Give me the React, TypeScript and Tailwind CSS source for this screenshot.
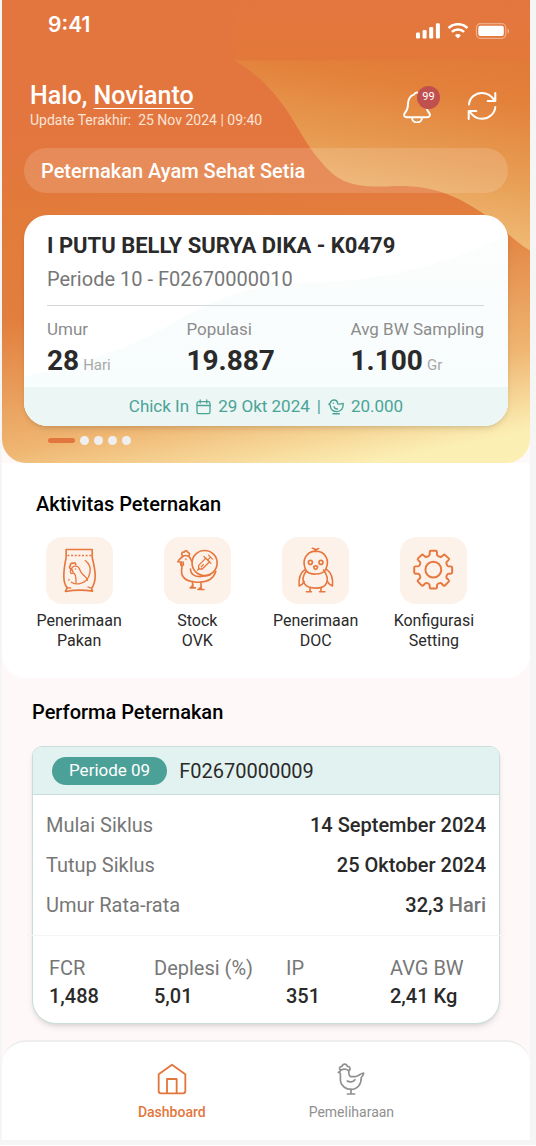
import React from "react";

const robo = "font-['Roboto',sans-serif]";

function StatusIcons() {
  return (
    <svg className="h-4 w-[95px]" viewBox="0 0 95 16" fill="none" aria-hidden="true">
      <g fill="#fff">
        <rect x="0" y="9.500" width="4" height="6" rx="1.200" />
        <rect x="6.600" y="7" width="4" height="8.500" rx="1.200" />
        <rect x="13.200" y="4" width="4" height="11.500" rx="1.200" />
        <rect x="19.900" y="0.300" width="4" height="15.200" rx="1.200" />
        <path d="M39 12.400a3.600 3.600 0 0 1 5.800 0L42 15.500z" />
        <rect x="62.300" y="2.700" width="25.500" height="10.400" rx="2" />
      </g>
      <path d="M32.500 5a13.800 13.800 0 0 1 19 0" stroke="#fff" strokeWidth="2.600" />
      <path d="M35.900 8.900a8.900 8.900 0 0 1 12.200 0" stroke="#fff" strokeWidth="2.600" />
      <rect x="60.400" y="0.700" width="29.400" height="14.600" rx="4" stroke="#fff" strokeOpacity=".4" strokeWidth="1.200" />
      <path d="M91.600 5.500c1.800.6 1.800 4.400 0 5z" fill="#fff" fillOpacity=".5" />
    </svg>
  );
}

function HeaderArt() {
  return (
    <svg className="absolute inset-0 h-full w-full" viewBox="0 0 528 462" preserveAspectRatio="none" aria-hidden="true">
      <defs>
        <linearGradient id="base" gradientUnits="userSpaceOnUse" x1="40" y1="200" x2="103" y2="515">
          <stop offset="0" stopColor="#e27b3a" />
          <stop offset=".35" stopColor="#e27f3e" />
          <stop offset=".75" stopColor="#efb672" />
          <stop offset="1" stopColor="#fcefb4" />
        </linearGradient>
        <linearGradient id="top" gradientUnits="userSpaceOnUse" x1="0" y1="0" x2="0" y2="220">
          <stop offset="0" stopColor="#e3763f" />
          <stop offset=".6" stopColor="#e3763f" />
          <stop offset="1" stopColor="#e3763f" stopOpacity="0" />
        </linearGradient>
        <linearGradient id="wave" gradientUnits="userSpaceOnUse" x1="410" y1="40" x2="375" y2="245">
          <stop offset="0" stopColor="#e17a38" />
          <stop offset=".2" stopColor="#e3803a" />
          <stop offset=".6" stopColor="#e8a056" />
          <stop offset="1" stopColor="#f2c381" />
        </linearGradient>
        <linearGradient id="bar" x1="0" y1="0" x2="0" y2="1">
          <stop offset="0" stopColor="#e3763f" />
          <stop offset="1" stopColor="#e27839" />
        </linearGradient>
      </defs>
      <path d="M0 0h528v462H0z" fill="url(#base)" />
      <path d="M0 0h528v220H0z" fill="url(#top)" />
      <path
        d="M232 60C283 90 293 130 316 158C336 183 350 187 385 186C425 184 449 191 484 215C500 227 511 240 528 250V60z"
        fill="url(#wave)"
      />
      <path d="M232 0h296v60H232z" fill="url(#bar)" />
    </svg>
  );
}

function CardArt() {
  return (
    <svg className="absolute inset-0 h-full w-full" viewBox="0 0 483 211" preserveAspectRatio="none" aria-hidden="true">
      <defs>
        <linearGradient id="cardWave" x1="0" y1="0" x2="0" y2="1">
          <stop offset="0" stopColor="#fcfdfd" />
          <stop offset="1" stopColor="#f6fcfc" />
        </linearGradient>
      </defs>
      <path d="M240 66C290 70 340 66 380 56C430 45 455 32 483 20V211H0V162C60 148 110 132 145 110C175 92 210 76 240 71z" fill="url(#cardWave)" />
    </svg>
  );
}

function BellIcon() {
  return (
    <svg className="h-8 w-[30px]" viewBox="0 0 30 32" fill="none" stroke="#fff" strokeWidth="2" strokeLinejoin="round" aria-hidden="true">
      <path d="M12.200 3.400a3 3 0 0 1 5.600 0c4 1.500 6.200 5 6.200 9.600 0 4.400 1 6.500 3.200 9 1.400 1.800.7 4.200-1.600 4.200H4.400c-2.300 0-3-2.400-1.600-4.200C5 19.500 6 17.400 6 13c0-4.600 2.200-8.100 6.200-9.600z" />
      <path d="M10 26.400a5 5 0 0 0 10 0" />
    </svg>
  );
}

function RefreshIcon() {
  return (
    <svg className="h-[30px] w-[30px]" viewBox="0 0 30 30" fill="none" stroke="#fff" strokeWidth="2" strokeLinecap="round" strokeLinejoin="round" aria-hidden="true">
      <path d="M2 13.500C2.500 6.500 8.500 2 15 2c5 0 9.500 2.800 12.500 7.600M28.300 2v8h-7.600" />
      <path d="M28.300 16C27.800 23 21.500 27.800 15 27.800c-5 0-9.500-2.800-12.500-7.600M1.700 28v-8h7.600" />
    </svg>
  );
}

function CalendarIcon() {
  return (
    <svg className="h-4 w-[15px]" viewBox="0 0 15 16" fill="none" stroke="#4ba396" strokeWidth="1.300" strokeLinecap="round" aria-hidden="true">
      <rect x="1" y="2.700" width="13" height="12" rx="1.800" />
      <path d="M1 6.500h13M4.200 1v3M10.800 1v3" />
    </svg>
  );
}

function ChickIcon() {
  return (
    <svg className="h-4 w-4" viewBox="0 0 16 16" fill="none" stroke="#4ba396" strokeWidth="1.400" strokeLinecap="round" strokeLinejoin="round" aria-hidden="true">
      <path d="M.9 5.200 2.300 4C2.800 2 4.200 1 6 1c2.300 0 3.500 1.700 3.700 3.800 2 .8 3.400.4 5.400-.4.6 5-2.200 8.200-6.200 8.200-4 0-6.800-2.300-6.600-6.400z" />
      <path d="M6 7.800c.5 1.700 1.800 2.400 3.400 2.200M5 14.800h6.300" />
      <circle cx="5.200" cy="4.200" r=".3" fill="#4ba396" strokeWidth=".8" />
    </svg>
  );
}

const tileStroke = {
  fill: "none",
  stroke: "#e6783f",
  strokeWidth: 5,
  strokeLinecap: "round" as const,
  strokeLinejoin: "round" as const,
  "aria-hidden": true,
};

function FeedBagIcon() {
  return (
    <svg className="h-full w-full" viewBox="0 0 203 203" {...tileStroke}>
      <path d="M61 38h79v24c5 20 9 38 9 56 0 17-4 28-11 38l3 8c-25-4-53-4-82 1l5-11c-8-10-10-22-10-36 0-18 3-36 7-56z" />
      <path d="M65 56h72" strokeDasharray="6 5" strokeLinecap="butt" />
      <path d="M63 153l12 2M127 152l9 2" strokeWidth="4" />
      <path d="M119 71c12 9 17 23 14 37-3 18-16 31-33 34-9 1-17-1-23-5" strokeWidth="4" />
      <circle cx="69" cy="130" r="1.500" strokeWidth="2" />
      <path d="M78 97c-7 0-9-7-4-10-2-6 4-9 8-7 4-4 9-1 8 4" strokeWidth="5" />
      <path d="M80 92c5-5 15-5 19 1 5 7 5 13 11 19 7 6 13 10 16 19M80 92l-6 7 6 1c-1 7 5 9 8 14 4 7 2 14 3 24" strokeWidth="4" />
      <path d="M75 101c-3 5 0 11 5 9" strokeWidth="4" />
      <circle cx="89" cy="97" r="1.500" fill="#e6783f" strokeWidth="1" />
    </svg>
  );
}

function StockIcon() {
  return (
    <svg className="h-full w-full" viewBox="0 0 203 203" {...tileStroke}>
      <circle cx="123" cy="79" r="38" />
      <path d="M56 57c-5-6-2-12 5-11 3-7 11-4 11 1 7 0 6 7 3 10" />
      <path d="M54 62c5-6 14-7 21-3 5 3 6 9 9 15" />
      <path d="M54 61c-5 4-9 8-12 14l11 1v4c0 6 3 9 1 14-4 22 7 37 27 40l17 3c32 2 52-10 59-33" />
      <path d="M52 77c-3 6 0 12 5 9 3-2 2-6 1-10" />
      <path d="M80 97c1 15 12 23 28 23l30-4" />
      <path d="M86 135l2 19m-9 0h16M88 145l-7 9M112 137l1 22m-10 0h18m-8-9-7 8" />
      <circle cx="66" cy="67" r="2" fill="#e6783f" strokeWidth="1" />
      <path d="M105 86l22-22 11 11-22 22h-11zM102 100l5-5M121 59l21 21M135 67l6-6M135 55l12 12" strokeWidth="4" />
      <path d="M113 90l6-6" strokeWidth="4" />
    </svg>
  );
}

function ChickTileIcon() {
  return (
    <svg className="h-full w-full" viewBox="0 0 203 203" {...tileStroke}>
      <path d="M72 100c-14-32 3-55 29-57 31 0 45 28 31 56-9 17-51 18-60 1z" />
      <path d="M101 42c-1-5-4-8-9-8m9 8c2-4 6-6 10-7m-9 7V37" />
      <path d="M73 104c-20 28-6 51 29 51 33 0 47-23 24-55" />
      <path d="M70 98c-14 10-20 30-18 50 7-2 12-7 15-13M135 98c14 10 20 30 18 50-7-2-12-7-15-13" />
      <path d="M85 155v10m-11 1h15M118 155v10m-4 1h16" />
      <circle cx="86" cy="77" r="6" />
      <circle cx="118" cy="77" r="6" />
      <path d="M96 90c4-3 8-3 12 0-1 5-3 8-6 8s-5-3-6-8z" />
    </svg>
  );
}

function GearIcon() {
  return (
    <svg className="h-full w-full" viewBox="0 0 203 203" {...tileStroke} strokeWidth={6}>
      <path d="M94 42h14q4 0 4 4v8c0 3 10 8 13 6l6-5q3-3 6 0l10 9q3 3 0 6l-6 6c-2 3 2 13 6 13h7q4 0 4 4v14q0 4-4 4h-7c-4 0-8 10-6 13l6 6q3 3 0 6l-10 10q-3 3-6 0l-6-6c-3-2-13 2-13 6v6q0 4-4 4H94q-4 0-4-4v-6c0-4-10-8-13-6l-6 6q-3 3-6 0l-10-10q-3-3 0-6l6-6c2-3-2-13-6-13h-8q-4 0-4-4V93q0-4 4-4h8c4 0 8-10 6-13l-6-6q-3-3 0-6l10-9q3-3 6 0l6 5c3 2 13-3 13-6v-8q0-4 4-4z" />
      <circle cx="101" cy="99" r="24" />
    </svg>
  );
}

function HomeIcon() {
  return (
    <svg className="h-8 w-[30px]" viewBox="0 0 90 96" fill="none" stroke="#e2773d" strokeWidth="5.500" strokeLinejoin="round" aria-hidden="true">
      <path d="M5 34 45 5l40 29v50c0 4-3 7-7 7H12c-4 0-7-3-7-7z" />
      <path d="M30 91V48h29v43" />
    </svg>
  );
}

function HenIcon() {
  return (
    <svg className="h-8 w-[30px]" viewBox="0 0 90 96" fill="none" stroke="#909090" strokeWidth="5" strokeLinecap="round" strokeLinejoin="round" aria-hidden="true">
      <path d="M14 22c-6-4-4-12 4-12 2-9 14-9 16 0 9 0 11 10 4 13-7-5-17-5-24-1z" />
      <path d="M14 22c-1 3-3 5-7 6l6 3c1 12-1 17 1 26 3 13 16 22 31 22 20 0 31-15 31-36 3-2 6-8 7-13-12 2-16 11-26 11H46c-6 0-8-6-8-18" />
      <path d="M34 54c6 4 17 4 23-4M45 79v13M34 93h22" />
    </svg>
  );
}

const activities = [
  { lines: ["Penerimaan", "Pakan"], Icon: FeedBagIcon },
  { lines: ["Stock", "OVK"], Icon: StockIcon },
  { lines: ["Penerimaan", "DOC"], Icon: ChickTileIcon },
  { lines: ["Konfigurasi", "Setting"], Icon: GearIcon },
];

const cycle = [
  { label: "Mulai Siklus", value: "14 September 2024", unit: "" },
  { label: "Tutup Siklus", value: "25 Oktober 2024", unit: "" },
  { label: "Umur Rata-rata", value: "32,3", unit: "Hari" },
];

const results = [
  { label: "FCR", value: "1,488" },
  { label: "Deplesi (%)", value: "5,01" },
  { label: "IP", value: "351" },
  { label: "AVG BW", value: "2,41 Kg" },
];

const flock = [
  { label: "Umur", value: "28", unit: "Hari" },
  { label: "Populasi", value: "19.887", unit: "" },
  { label: "Avg BW Sampling", value: "1.100", unit: "Gr" },
];

function Header() {
  return (
    <header className="relative overflow-hidden rounded-b-3xl px-[22px] pb-[18px] text-white">
      <HeaderArt />
      <div className="relative">
        <div className="flex h-[60px] items-center justify-between pb-2.5 pl-6">
          <span className="font-['Inter',sans-serif] text-[21px] font-semibold">9:41</span>
          <span className="-mr-[3px] pt-3">
            <StatusIcons />
          </span>
        </div>
        <div className="flex items-start justify-between pt-5 pr-[11px] pl-1.5">
          <div>
            <h1 className="text-[25px] leading-8 font-medium">
              Halo, <a href="#profil" className="underline decoration-1 underline-offset-4">Novianto</a>
            </h1>
            <p className="text-sm leading-4 whitespace-pre text-[#fbe3d5]">Update Terakhir:  25 Nov 2024 | 09:40</p>
          </div>
          <div className="flex items-start gap-[35px] pt-[11px]">
            <button type="button" aria-label="Notifikasi" className="relative">
              <BellIcon />
              <span className="absolute -top-[5px] left-[15px] flex h-[23px] w-[23px] items-center justify-center rounded-full bg-[#c0504d] text-[11px]">99</span>
            </button>
            <button type="button" aria-label="Muat ulang">
              <RefreshIcon />
            </button>
          </div>
        </div>
        <div className="mt-5 flex h-[45px] items-center rounded-full bg-white/15 px-[17px] text-xl font-medium">Peternakan Ayam Sehat Setia</div>
        <section className="relative mt-[22px] overflow-hidden rounded-3xl bg-white text-[#2a2a2a] shadow-md">
          <CardArt />
          <div className="relative pt-[17px] pr-6 pl-[23px]">
            <h2 className="text-[22px] leading-7 font-bold">I PUTU BELLY SURYA DIKA - K0479</h2>
            <p className="mt-[7px] text-xl leading-6 text-[#777]">Periode 10 - F02670000010</p>
            <dl className="mt-3.5 flex justify-between border-t border-[#d4d8d8] pt-[11px] pb-2">
              {flock.map((f) => (
                <div key={f.label}>
                  <dt className="text-[17px] leading-6 text-[#8c8c8c]">{f.label}</dt>
                  <dd className="mt-0.5 text-[28px] leading-9 font-bold">
                    {f.value}
                    {f.unit && <span className="ml-1 text-[15px] leading-none font-normal text-[#a8a8a8]">{f.unit}</span>}
                  </dd>
                </div>
              ))}
            </dl>
          </div>
          <p className="relative flex h-[39px] items-center justify-center gap-[7px] bg-[#ebf6f5] text-[17px] text-[#4ba396]">
            <span>Chick In</span>
            <CalendarIcon />
            <span>29 Okt 2024</span>
            <span>|</span>
            <ChickIcon />
            <span>20.000</span>
          </p>
        </section>
        <div className="flex items-center gap-[5px] pt-[10px] pl-6">
          <button type="button" aria-label="Kandang 1" className="h-[5px] w-[27px] rounded-full bg-[#e2763f]" />
          {[2, 3, 4, 5].map((n) => (
            <button key={n} type="button" aria-label={`Kandang ${n}`} className="h-[9px] w-[9px] rounded-full bg-[#f0eff0]" />
          ))}
        </div>
      </div>
    </header>
  );
}

export default function App() {
  return (
    <div className={`bg-[#f5f5f5] pr-1.5 pb-[5px] pl-0.5 ${robo}`}>
      <div className="bg-[#fef9f8]">
        <Header />
        <section className="rounded-b-3xl bg-white pt-[27px] pr-[37px] pb-[27px] pl-[18px]">
          <h2 className="pl-4 text-xl leading-7 font-medium text-black">Aktivitas Peternakan</h2>
          <ul className="mt-[19px] grid grid-cols-4">
            {activities.map(({ lines, Icon }) => (
              <li key={lines.join(" ")}>
                <button type="button" className="flex w-full flex-col items-center text-base leading-5 text-[#2a2a2a]">
                  <span className="mb-[7px] h-[67px] w-[67px] rounded-2xl bg-[#fdf2ea]">
                    <Icon />
                  </span>
                  <span>{lines[0]}</span>
                  <span>{lines[1]}</span>
                </button>
              </li>
            ))}
          </ul>
        </section>
        <main className="px-[30px] pt-5 pb-4">
          <h2 className="text-xl leading-7 font-medium text-black">Performa Peternakan</h2>
          <article className="mt-5 rounded-t-[10px] rounded-b-3xl border border-[#c9dedb] bg-white shadow-md">
            <div className="flex h-12 items-center gap-3 rounded-t-[9px] border-b border-[#c9dedb] bg-[#e2f2f0] px-[19px]">
              <span className="flex h-7 items-center rounded-full bg-[#4ba097] px-[17px] text-[17px] text-white">Periode 09</span>
              <span className="text-xl text-[#2a2a2a]">F02670000009</span>
            </div>
            <dl className="flex flex-col gap-3 px-[13px] py-4 text-xl leading-7">
              {cycle.map((c) => (
                <div key={c.label} className="flex justify-between">
                  <dt className="text-[#777]">{c.label}</dt>
                  <dd className="font-medium text-[#2a2a2a]">
                    {c.value}
                    {c.unit && <span className="text-[#777]"> {c.unit}</span>}
                  </dd>
                </div>
              ))}
            </dl>
            <hr className="-mx-1.5 border-[#f3f5f5]" />
            <dl className="grid grid-cols-[105fr_132fr_104fr_95fr] pt-[18px] pr-3.5 pb-[13px] pl-4 text-xl leading-7">
              {results.map((r) => (
                <div key={r.label}>
                  <dt className="text-[#777]">{r.label}</dt>
                  <dd className="font-medium text-[#2a2a2a]">{r.value}</dd>
                </div>
              ))}
            </dl>
          </article>
        </main>
        <nav className="flex h-[100px] justify-center gap-[103px] rounded-t-3xl border-t-2 border-[#efeded] bg-white pt-[21px] text-sm">
          <a href="#dashboard" aria-current="page" className="flex flex-col items-center gap-[7px] font-medium text-[#e2773d]">
            <HomeIcon />
            <span>Dashboard</span>
          </a>
          <a href="#pemeliharaan" className="flex flex-col items-center gap-[7px] text-[#909090]">
            <HenIcon />
            <span>Pemeliharaan</span>
          </a>
        </nav>
      </div>
    </div>
  );
}
